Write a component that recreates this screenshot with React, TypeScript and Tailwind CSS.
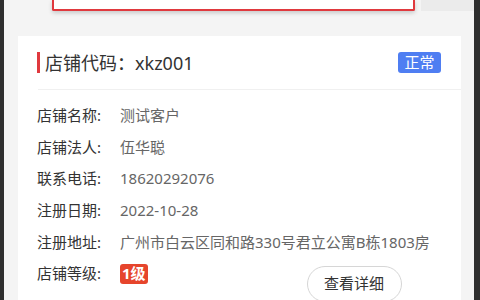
const rows = [
  { label: '店铺名称:', value: '测试客户' },
  { label: '店铺法人:', value: '伍华聪' },
  { label: '联系电话:', value: '18620292076' },
  { label: '注册日期:', value: '2022-10-28' },
  { label: '注册地址:', value: '广州市白云区同和路330号君立公寓B栋1803房' },
]

export default function App() {
  return (
    <div
      className="flex h-[300px] w-[480px] overflow-hidden bg-[#f4f4f4]"
      style={{ fontFamily: '"Noto Sans", "Noto Sans CJK SC", sans-serif' }}
    >
      <div className="w-[4px] shrink-0 bg-[#2e2e2e]" />
      <div className="flex min-w-0 flex-1 flex-col">
        {/* top search box remnant */}
        <div className="flex h-[11px] shrink-0">
          <div className="ml-[48px] w-[363px] rounded-b-[2px] border-x-2 border-b-2 border-[#e0393e] bg-white shadow-[0_2px_4px_rgba(0,0,0,0.18)]" />
          <div className="ml-[6px] flex-1 bg-[#ebebeb]" />
        </div>

        {/* card */}
        <div className="ml-[14px] mr-[13px] mt-[25px] flex-1 bg-white">
          <div className="flex h-[53px] items-center pl-[19px] pr-[20px]">
            <div className="h-[21px] w-[3px] bg-[#e0393e]" />
            <div className="ml-[5px] text-[18px] leading-none text-[#333]">店铺代码：xkz001</div>
            <div className="ml-auto flex h-[21px] w-[43px] items-center justify-center rounded-[3px] bg-[#4f7ef2] text-[15px] leading-none text-white">
              正常
            </div>
          </div>
          <div className="ml-[20px] h-px bg-[#f0f0f0]" />
          <div className="flex flex-col pl-[19px] pt-[10px]">
            {rows.map((r) => (
              <div key={r.label} className="flex h-[31.6px] items-center text-[15px] leading-none">
                <div className="w-[83px] text-[#333]">{r.label}</div>
                <div className="text-[#666]">{r.value}</div>
              </div>
            ))}
            <div className="flex h-[31.6px] items-center text-[15px] leading-none">
              <div className="w-[83px] text-[#333]">店铺等级:</div>
              <div className="flex h-[20px] items-center rounded-[3px] bg-[#e6452c] px-[2px] text-[15px] font-bold leading-none text-white">
                1级
              </div>
              <div className="ml-[159px] mt-[20px] flex h-[36px] w-[95px] items-center justify-center rounded-full border border-[#d6d6d6] text-[15px] text-[#333]">
                查看详细
              </div>
            </div>
          </div>
        </div>
      </div>
      <div className="w-[6px] shrink-0 bg-[#2e2e2e]" />
    </div>
  )
}
